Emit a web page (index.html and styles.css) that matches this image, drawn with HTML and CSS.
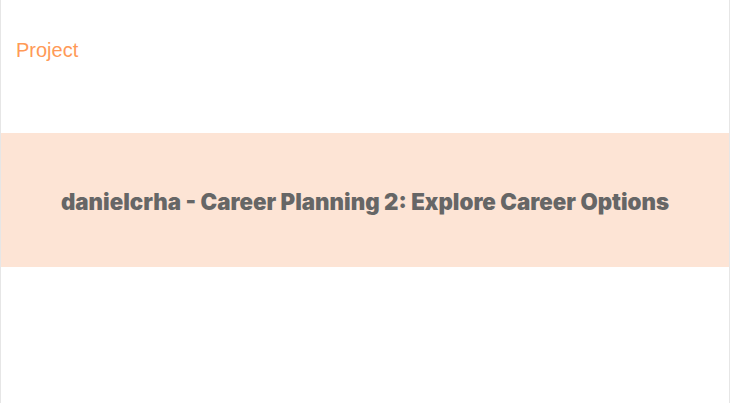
FILE: index.html
```html
<!DOCTYPE html>
<html>
<head>
<meta charset="utf-8">
<link rel="stylesheet" href="styles.css">
</head>
<body>
<div class="page">
  <div class="head">Project</div>
  <div class="band">
    <h1 class="title">danielcrha - Career Planning 2: Explore Career Options</h1>
  </div>
</div>
</body>
</html>
```
FILE: styles.css
```css
html, body {
  margin: 0;
  padding: 0;
  background: #fff;
}
.page {
  height: 403px;
  border-left: 1px solid #e6e6e6;
  border-right: 1px solid #e6e6e6;
  box-sizing: border-box;
}
.head {
  height: 133px;
  padding: 39px 0 0 15px;
  box-sizing: border-box;
  font-family: "Liberation Sans", Arial, sans-serif;
  font-size: 20px;
  color: #ff9a57;
}
.band {
  height: 134px;
  background: #fde4d5;
  display: flex;
  align-items: center;
  justify-content: center;
}
.title {
  margin: 0;
  padding-top: 2px;
  font-family: Inter, "Liberation Sans", sans-serif;
  font-weight: 900;
  font-size: 22.3px;
  color: #666666;
}
```
